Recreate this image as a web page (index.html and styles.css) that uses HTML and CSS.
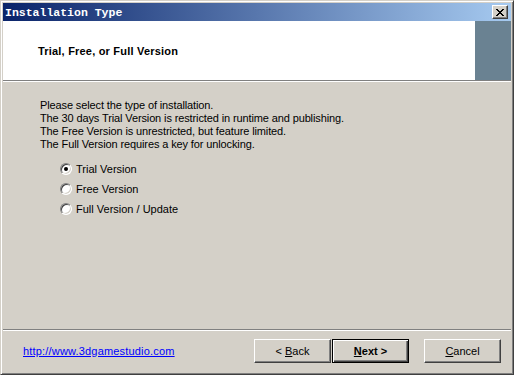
FILE: index.html
```html
<!DOCTYPE html>
<html lang="en">
<head>
	<meta charset="UTF-8">
	<title>Installation Type</title>
	<link rel="stylesheet" href="styles.css">
</head>
<body>

	<div class="window">
		<div class="titlebar">
			<span class="titlebar-text">Installation Type</span>
			<button class="titlebar-close" type="button">
				<svg width="8" height="7" viewBox="0 0 8 7">
					<path d="M0 0h2v1h1v1h2v-1h1v-1h2v1h-1v1h-1v1h-1v1h1v1h1v1h1v1h-2v-1h-1v-1h-2v1h-1v1h-2v-1h1v-1h1v-1h1v-1h-1v-1h-1v-1h-1z" fill="#000"/>
				</svg>
			</button>
		</div>

		<div class="header">
			<div class="header-main">
				<h1 class="header-title">Trial, Free, or Full Version</h1>
			</div>
			<div class="header-side"></div>
		</div>

		<div class="content">
			<p class="intro">
				Please select the type of installation.<br>
				The 30 days Trial Version is restricted in runtime and publishing.<br>
				The Free Version is unrestricted, but feature limited.<br>
				The Full Version requires a key for unlocking.
			</p>

			<div class="radio-group">
				<label class="radio-row">
					<span class="radio radio-checked"></span>
					<span class="radio-label">Trial Version</span>
				</label>
				<label class="radio-row">
					<span class="radio"></span>
					<span class="radio-label">Free Version</span>
				</label>
				<label class="radio-row">
					<span class="radio"></span>
					<span class="radio-label">Full Version / Update</span>
				</label>
			</div>
		</div>

		<div class="footer">
			<a class="footer-link" href="#">http://www.3dgamestudio.com</a>
			<div class="footer-buttons">
				<button class="btn" type="button">&lt; <u>B</u>ack</button>
				<button class="btn btn-default" type="button"><u>N</u>ext &gt;</button>
				<button class="btn btn-cancel" type="button"><u>C</u>ancel</button>
			</div>
		</div>
	</div>

</body>
</html>
```

FILE: styles.css
```css
* {
	box-sizing: border-box;
}

html, body {
	margin: 0;
	padding: 0;
}

body {
	font-family: "Liberation Sans", Arial, sans-serif;
	font-size: 11px;
	color: #000;
	background: #d4d0c8;
}

.window {
	display: flex;
	flex-direction: column;
	width: 514px;
	height: 375px;
	padding: 2px;
	background: #d4d0c8;
	border: 1px solid;
	border-color: #d4d0c8 #404040 #404040 #d4d0c8;
	box-shadow: inset 1px 1px #fff, inset -1px -1px #808080;
}

.titlebar {
	display: flex;
	align-items: center;
	justify-content: space-between;
	height: 18px;
	padding: 0 3px 0 2px;
	background: linear-gradient(to right, #0a246a, #a6caf0);
}

.titlebar-text {
	font-family: "Liberation Mono", "Courier New", monospace;
	font-size: 11.5px;
	font-weight: bold;
	color: #fff;
}

.titlebar-close {
	display: flex;
	align-items: center;
	justify-content: center;
	width: 16px;
	height: 14px;
	padding: 0;
	background: #d4d0c8;
	border: 1px solid;
	border-color: #fff #404040 #404040 #fff;
	box-shadow: inset -1px -1px #808080;
}

.header {
	display: flex;
	height: 61px;
	border-bottom: 1px solid #fff;
}

.header-main {
	flex: 1;
	display: flex;
	align-items: center;
	padding-left: 35px;
	background: #fff;
	border-bottom: 1px solid #808080;
}

.header-side {
	width: 36px;
	background: #6a8292;
	border-bottom: 1px solid #808080;
}

.header-title {
	margin: 0;
	padding-top: 1px;
	font-size: 11px;
	font-weight: bold;
	letter-spacing: 0.2px;
}

.content {
	flex: 1;
	padding: 17px 0 0 37px;
}

.intro {
	margin: 0;
	line-height: 13px;
	letter-spacing: -0.12px;
}

.radio-group {
	display: flex;
	flex-direction: column;
	margin-top: 8px;
	padding-left: 20px;
}

.radio-row {
	display: flex;
	align-items: center;
	gap: 4px;
	height: 20px;
}

.radio {
	position: relative;
	width: 12px;
	height: 12px;
	border-radius: 50%;
	background: #fff;
	border: 1px solid;
	border-color: #808080 #fff #fff #808080;
	box-shadow: inset 1px 1px #404040, inset -1px -1px #d4d0c8;
}

.radio-checked::after {
	content: "";
	position: absolute;
	left: 3px;
	top: 3px;
	width: 4px;
	height: 4px;
	border-radius: 50%;
	background: #000;
}

.footer {
	display: flex;
	align-items: center;
	justify-content: space-between;
	height: 43px;
	padding: 1px 10px 0 20px;
	border-top: 1px solid #808080;
	box-shadow: inset 0 1px #fff;
}

.footer-link {
	margin-top: -2px;
	color: #0000ff;
	text-decoration: underline;
	letter-spacing: 0.18px;
}

.footer-buttons {
	display: flex;
	gap: 1px;
	margin-top: -2px;
}

.btn {
	width: 77px;
	height: 24px;
	padding: 0;
	font-family: "Liberation Sans", Arial, sans-serif;
	font-size: 11px;
	color: #000;
	background: #d4d0c8;
	border: 1px solid;
	border-color: #fff #404040 #404040 #fff;
	box-shadow: inset -1px -1px #808080, inset 1px 1px #d4d0c8;
}

.btn-default {
	font-weight: bold;
	border-color: #000;
	box-shadow: inset 1px 1px #fff, inset -1px -1px #404040, inset -2px -2px #808080;
}

.btn-cancel {
	margin-left: 14px;
}
```
